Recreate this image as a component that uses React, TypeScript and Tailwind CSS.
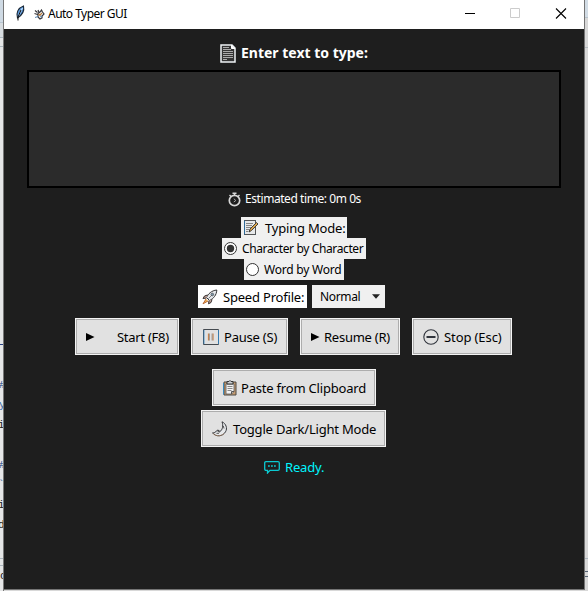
import type { ReactNode } from "react";

const Memo = ({ pencil = false }: { pencil?: boolean }) =>
  pencil ? (
    <svg width="16" height="17" viewBox="0 0 16 17" fill="none">
      <rect x="1.5" y="1.5" width="11" height="14" fill="#e6e8ea" stroke="#2e6b9b" />
      <path d="M1.5 1.5h11v14h-11" stroke="#555" />
      <path d="M3 4.5h7M3 6.5h6M3 8.5h5M3 10.5h3M3 12.5h2" stroke="#858585" />
      <path d="M6 13l1-3 6.500-6.500 1.500 1.500-6.500 6.500z" fill="#d9a34a" stroke="#333" strokeWidth=".9" />
    </svg>
  ) : (
    <svg width="16" height="19" viewBox="0 0 16 19" fill="none">
      <path d="M1 1h11l3 3v14H1z" fill="#343434" stroke="#eef2f5" strokeWidth="1.500" />
      <path d="M11.500 1v3.500H15" fill="#fff" stroke="#fff" />
      <path d="M3 3.500h6M3 5.500h8M3 7.500h10M3 9.500h10M3 11.500h10M3 13.500h10M3 15.500h4" stroke="#aaa" />
    </svg>
  );

const Feather = () => (
  <svg width="11" height="17" viewBox="0 0 11 17">
    <path d="M2.500 13C.8 8 3 3 8.500 1c.9 4-.5 8.500-6 12z" fill="#5796da" stroke="#1a2735" strokeWidth="1.100" />
    <path d="M7.500 3L3.300 11" stroke="#b9ddff" strokeWidth="1.300" />
    <path d="M6 5L3 12v3.500" fill="none" stroke="#111" />
  </svg>
);

const Hand = () => (
  <svg width="11" height="11" viewBox="0 0 11 11" fill="none">
    <path d="M1 1.500l2.500 2M4 1l1 2.500M.5 4.500l3 1M4 4.500l2-1.500 1.500-2 1 2L10 5 8 7v2L6 10 4 8z" stroke="#37373c" strokeWidth="1.200" />
    <path d="M4.500 5l2 2M6 6l2-2" stroke="#b57a3c" strokeWidth="1.200" />
    <path d="M1 8.500l3-1M6 8l2-1" stroke="#5584b3" />
  </svg>
);

const Watch = () => (
  <svg width="14" height="15" viewBox="0 0 14 15" fill="none">
    <circle cx="6.500" cy="8.500" r="5.200" stroke="#d8d8d8" strokeWidth="1.700" />
    <path d="M4.500 1.200h4M6.500 1v2M1.500 3L3 4.500M11.500 3L10 4.500" stroke="#d8d8d8" strokeWidth="1.400" />
    <path d="M5.800 6.700l2 1.800-2 1.500" stroke="#aaa" />
  </svg>
);

const Rocket = () => (
  <svg width="16" height="16" viewBox="0 0 16 16" fill="none">
    <path d="M4.500 8.500C6 5 9.500 1.500 14.800 1c-.2 5-3.300 8.700-7.300 10.500z" fill="#e5e9ed" stroke="#343434" />
    <path d="M5.500 6L2.500 7 1 9.500l3.500-.5M10 10.500l-1 3-2.500 1.300.5-3.300" fill="#c0a298" stroke="#3a3232" />
    <circle cx="10.300" cy="5.500" r="1.300" fill="#8bb8d6" stroke="#444" strokeWidth=".8" />
    <path d="M4 10l-3 4.800L6 12" fill="#f5b44d" stroke="#b86a3a" />
    <path d="M6.500 9.500l4-4" stroke="#555" strokeWidth=".7" />
  </svg>
);

const Play = () => (
  <svg width="9" height="10" viewBox="0 0 9 10"><path d="M0 1l8.500 4L0 9z" fill="#000" /></svg>
);
const PauseIcon = () => (
  <svg width="16" height="16" viewBox="0 0 16 16" fill="none">
    <path d="M.5 15.500V.5h15v15z" stroke="#454a50" />
    <path d="M1 1v14M15.500 1v14" stroke="#3288c8" strokeWidth=".8" />
    <path d="M5.500 4.500v7M10 4.500v7" stroke="#c4834f" strokeWidth="1.200" /><path d="M6.500 4.500v7M9 4.500v7" stroke="#777" strokeWidth=".6" />
  </svg>
);
const StopIcon = () => (
  <svg width="16" height="16" viewBox="0 0 16 16" fill="none" stroke="#30343c">
    <circle cx="8" cy="8" r="7.200" strokeWidth="1.100" /><path d="M3.500 8h9" strokeWidth="2" />
  </svg>
);
const Clipboard = () => (
  <svg width="14" height="16" viewBox="0 0 14 16" fill="none">
    <path d="M1 2h12v13H1z" fill="#c69c70" stroke="#4d4a46" />
    <path d="M.5 3v11.500" stroke="#3888bd" />
    <path d="M3 4h8v7.500L8.500 14H3z" fill="#f2f2f2" stroke="#555" strokeWidth=".8" />
    <path d="M4.500 6.500h5M4.500 8.500h5M4.500 10.500h4" stroke="#888" />
    <path d="M4 1.500h2l1-1 1 1h2V4H4z" fill="#ccd0d2" stroke="#333" />
    <path d="M8.500 14v-2.500H11" stroke="#555" />
  </svg>
);
const Moon = () => (
  <svg width="16" height="16" viewBox="0 0 16 16" fill="none">
    <path d="M10 .8c4 1.700 5.700 6.500 3.500 10-2.700 4.800-9.500 5.500-13 1 2 .3 3-.4 4-2l1.500-.8 2 1.500C10.500 9 11.500 4.500 10 .8z" fill="#e7e9eb" stroke="#34363a" />
    <path d="M5.500 10.200l2.500 1M11.300 5l.7 2.500M4.500 12.300h2.500" stroke="#555" />
    <path d="M1 12.500c3 3 8 3 11 0" stroke="#b78964" strokeWidth=".6" />
  </svg>
);
const Chat = () => (
  <svg width="16" height="13" viewBox="0 0 16 13" fill="none" stroke="#0bc9d0">
    <path d="M2 .7h12q1.300 0 1.300 1.300v6q0 1.300-1.300 1.300H6L3.500 12V9.300H2Q.7 9.300.7 8V2Q.7.7 2 .7z" strokeWidth="1.300" />
    <path d="M4 5h1.800M7 5h1.800M10 5h1.800" strokeWidth="1.700" />
  </svg>
);

const TkButton = ({ className, children }: { className: string; children: ReactNode }) => (
  <button className={`flex h-[37px] shrink-0 items-center border border-[#f4f4f4] bg-[#e1e1e1] text-left text-[13px] leading-[18px] text-black inset-ring inset-ring-[#adadad] ${className}`}>
    {children}
  </button>
);

const Radio = ({ checked = false }: { checked?: boolean }) => (
  <svg width="13" height="13" viewBox="0 0 13 13" className="shrink-0">
    <circle cx="6.500" cy="6.500" r="6" fill="#fff" stroke="#333" />
    {checked && <circle cx="6.500" cy="6.500" r="3.700" fill="#333" />}
  </svg>
);

const CodeEdge = () => (
  <aside className="flex h-[591px] w-1 shrink-0 flex-col overflow-hidden border-r border-[#777] bg-[#e5e6e7] font-['Liberation_Mono',monospace] text-[11px] leading-[20px] text-[#222]">
    <div className="h-[23px] border-b border-[#b8c5d0] bg-[#cfdae4]" />
    <div className="h-[15px] border-b border-[#aeb9c1] bg-[#d7dce0]" />
    <div className="h-[9px] border-b border-[#aeb9c1]" />
    <div className="h-[297px]" />
    <div className="h-[31px] border-t border-[#263f83]" />
    <div className="-ml-px text-[#123f84]">#</div><div className="-ml-px text-[#3568a5]">y</div><div className="-ml-[2px]">i</div>
    <div className="h-5" /><div className="-ml-px text-[#123f84]">#</div><div className="-ml-[2px] text-[#3568a5]">`</div><div className="-ml-[2px]">i</div><div className="-ml-[2px]">d</div>
    <div className="mt-[23px] h-2 border-y border-[#adb7bf]" /><div>c</div>
  </aside>
);

export default function App() {
  return (
    <div className="flex h-[591px] w-[588px] overflow-hidden bg-[#d8d8d8] font-['Noto_Sans','Open_Sans',sans-serif] whitespace-nowrap">
      <CodeEdge />
      <main className="flex h-[590px] w-[581px] shrink-0 flex-col border-r border-b border-[#747474] bg-[#1e1e1e]">
        <header className="flex h-[29px] shrink-0 items-start bg-white text-[12px] leading-4 text-black">
          <div className="ml-[11px] mt-[5px]"><Feather /></div>
          <div className="ml-2 mt-[9px]"><Hand /></div>
          <span className="ml-[3px] mt-[6px] tracking-[-0.52px]">Auto Typer GUI</span>
          <svg className="ml-auto mr-[17px] mt-2" width="102" height="11" viewBox="0 0 102 11" fill="none">
            <path d="M0 5.500h10" stroke="#000" />
            <path d="M45.500.5h9v9h-9z" stroke="#ccc" />
            <path d="M91 .5l10 10M101 .5l-10 10" stroke="#000" strokeWidth="1.100" />
          </svg>
        </header>
        <h1 className="ml-[216px] mt-[14px] flex h-5 items-center text-[14px] leading-5 font-bold text-white">
          <Memo /><span className="ml-[5px]">Enter text to type:</span>
        </h1>
        <textarea className="ml-[23px] mt-[7px] block h-[118px] w-[534px] shrink-0 resize-none border-2 border-black bg-[#2b2b2b] outline-none" />
        <div className="ml-[224px] mt-[3px] flex h-4 items-center text-[12px] leading-4 text-white">
          <Watch /><span className="ml-[3px] tracking-[-0.43px]">Estimated time: 0m 0s</span>
        </div>
        <div className="ml-[237px] mt-[10px] flex h-[21px] w-[106px] items-center bg-[#f0f0f0] pl-[2px] text-[13px] leading-[18px]">
          <Memo pencil /><span className="ml-[6px] mt-px tracking-[-0.2px]">Typing Mode:</span>
        </div>
        <label className="ml-[218px] flex h-[21px] w-[144px] items-center bg-[#f0f0f0] pl-[2px] text-[12px] leading-4">
          <Radio checked /><span className="ml-[5px] tracking-[-0.37px]">Character by Character</span>
        </label>
        <label className="ml-[240px] flex h-[21px] w-[100px] items-center bg-[#f0f0f0] pl-[2px] text-[12px] leading-4">
          <Radio /><span className="ml-[5px] tracking-[-0.22px]">Word by Word</span>
        </label>
        <div className="ml-[194px] mt-[5px] flex h-[23px] gap-[5px] text-black">
          <div className="flex w-[109px] items-center bg-white pl-[4px] text-[13px] leading-[18px]"><Rocket /><span className="ml-[5px] mt-px tracking-[-0.2px]">Speed Profile:</span></div>
          <div className="flex w-[73px] items-center justify-between bg-[#f0f0f0] pl-2 pr-[5px] text-[12px]">
            <span className="tracking-[-0.35px]">Normal</span>
            <svg width="8" height="5"><path d="M0 .3h8l-4 4.500z" fill="#222" /></svg>
          </div>
        </div>
        <div className="ml-[71px] mt-[10px] flex gap-3">
          <TkButton className="w-[104px] pl-[10px]"><Play /><span className="ml-[22px] tracking-[-0.28px]">Start (F8)</span></TkButton>
          <TkButton className="w-[97px] pl-[11px]"><PauseIcon /><span className="ml-[5px] tracking-[-0.22px]">Pause (S)</span></TkButton>
          <TkButton className="w-[100px] pl-[10px]"><Play /><span className="ml-1 tracking-[-0.25px]">Resume (R)</span></TkButton>
          <TkButton className="w-[100px] pl-[10px]"><StopIcon /><span className="ml-[5px] tracking-[-0.1px]">Stop (Esc)</span></TkButton>
        </div>
        <div className="mt-[14px] flex flex-col items-start gap-1">
          <TkButton className="ml-[208px] w-[164px] pl-[10px]"><Clipboard /><span className="ml-[4px] tracking-[-0.2px]">Paste from Clipboard</span></TkButton>
          <TkButton className="ml-[197px] w-[185px] pl-[10px]"><Moon /><span className="ml-[5px] tracking-[-0.19px]">Toggle Dark/Light Mode</span></TkButton>
        </div>
        <div className="ml-[260px] mt-[11px] flex h-[18px] items-center text-[13px] leading-[18px] text-[#00f5ff]">
          <Chat /><span className="ml-[5px] tracking-[-0.15px]">Ready.</span>
        </div>
      </main>
      <aside className="flex w-[3px] shrink-0 flex-col">
        <div className="h-[18px] border-b border-[#b9c3cc] bg-[#d2dce5]" />
        <div className="h-[30px] border-b border-[#b5bbc0]" />
        <div className="h-[511px] border-b border-[#adb7c0]" />
        <div className="mt-3 h-[6px] border-y border-[#546172]" />
      </aside>
    </div>
  );
}
